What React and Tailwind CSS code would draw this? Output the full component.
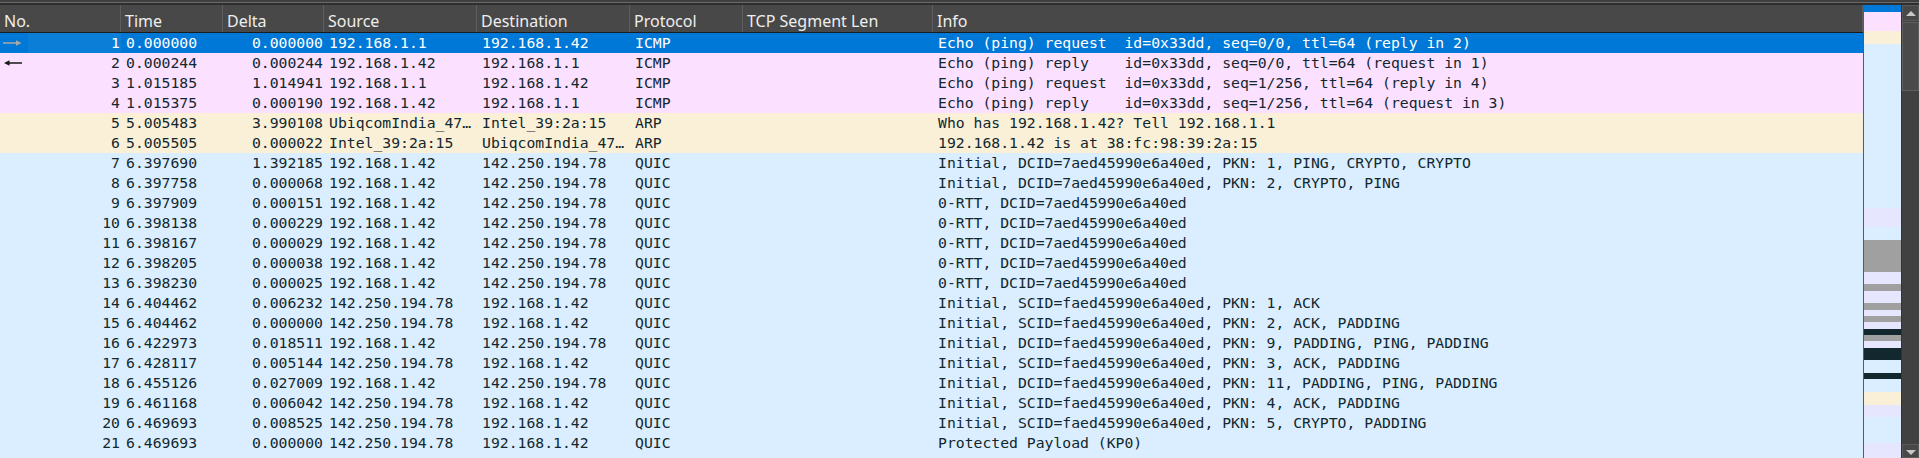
import React from "react";

const COLS = [
  { key: "no", title: "No.", w: "w-[121px]", right: true },
  { key: "time", title: "Time", w: "w-[102px]" },
  { key: "delta", title: "Delta", w: "w-[101px]", right: true },
  { key: "src", title: "Source", w: "w-[153px]" },
  { key: "dst", title: "Destination", w: "w-[153px]" },
  { key: "proto", title: "Protocol", w: "w-[113px]" },
  { key: "tcp", title: "TCP Segment Len", w: "w-[190px]" },
  { key: "info", title: "Info", w: "w-[930px]" },
];

const A = "192.168.1.42";
const G = "142.250.194.78";
const DC = "DCID=7aed45990e6a40ed";
const SC = "SCID=faed45990e6a40ed";
const DF = "DCID=faed45990e6a40ed";

const ROWS = [
  { c: "pink", no: 1, time: "0.000000", delta: "0.000000", src: "192.168.1.1", dst: A, proto: "ICMP", info: "Echo (ping) request  id=0x33dd, seq=0/0, ttl=64 (reply in 2)", sel: true, arrow: "right" },
  { c: "pink", no: 2, time: "0.000244", delta: "0.000244", src: A, dst: "192.168.1.1", proto: "ICMP", info: "Echo (ping) reply    id=0x33dd, seq=0/0, ttl=64 (request in 1)", arrow: "left" },
  { c: "pink", no: 3, time: "1.015185", delta: "1.014941", src: "192.168.1.1", dst: A, proto: "ICMP", info: "Echo (ping) request  id=0x33dd, seq=1/256, ttl=64 (reply in 4)" },
  { c: "pink", no: 4, time: "1.015375", delta: "0.000190", src: A, dst: "192.168.1.1", proto: "ICMP", info: "Echo (ping) reply    id=0x33dd, seq=1/256, ttl=64 (request in 3)" },
  { c: "beige", no: 5, time: "5.005483", delta: "3.990108", src: "UbiqcomIndia_47…", dst: "Intel_39:2a:15", proto: "ARP", info: "Who has 192.168.1.42? Tell 192.168.1.1" },
  { c: "beige", no: 6, time: "5.005505", delta: "0.000022", src: "Intel_39:2a:15", dst: "UbiqcomIndia_47…", proto: "ARP", info: "192.168.1.42 is at 38:fc:98:39:2a:15" },
  { c: "blue", no: 7, time: "6.397690", delta: "1.392185", src: A, dst: G, proto: "QUIC", info: `Initial, ${DC}, PKN: 1, PING, CRYPTO, CRYPTO` },
  { c: "blue", no: 8, time: "6.397758", delta: "0.000068", src: A, dst: G, proto: "QUIC", info: `Initial, ${DC}, PKN: 2, CRYPTO, PING` },
  { c: "blue", no: 9, time: "6.397909", delta: "0.000151", src: A, dst: G, proto: "QUIC", info: `0-RTT, ${DC}` },
  { c: "blue", no: 10, time: "6.398138", delta: "0.000229", src: A, dst: G, proto: "QUIC", info: `0-RTT, ${DC}` },
  { c: "blue", no: 11, time: "6.398167", delta: "0.000029", src: A, dst: G, proto: "QUIC", info: `0-RTT, ${DC}` },
  { c: "blue", no: 12, time: "6.398205", delta: "0.000038", src: A, dst: G, proto: "QUIC", info: `0-RTT, ${DC}` },
  { c: "blue", no: 13, time: "6.398230", delta: "0.000025", src: A, dst: G, proto: "QUIC", info: `0-RTT, ${DC}` },
  { c: "blue", no: 14, time: "6.404462", delta: "0.006232", src: G, dst: A, proto: "QUIC", info: `Initial, ${SC}, PKN: 1, ACK` },
  { c: "blue", no: 15, time: "6.404462", delta: "0.000000", src: G, dst: A, proto: "QUIC", info: `Initial, ${SC}, PKN: 2, ACK, PADDING` },
  { c: "blue", no: 16, time: "6.422973", delta: "0.018511", src: A, dst: G, proto: "QUIC", info: `Initial, ${DF}, PKN: 9, PADDING, PING, PADDING` },
  { c: "blue", no: 17, time: "6.428117", delta: "0.005144", src: G, dst: A, proto: "QUIC", info: `Initial, ${SC}, PKN: 3, ACK, PADDING` },
  { c: "blue", no: 18, time: "6.455126", delta: "0.027009", src: A, dst: G, proto: "QUIC", info: `Initial, ${DF}, PKN: 11, PADDING, PING, PADDING` },
  { c: "blue", no: 19, time: "6.461168", delta: "0.006042", src: G, dst: A, proto: "QUIC", info: `Initial, ${SC}, PKN: 4, ACK, PADDING` },
  { c: "blue", no: 20, time: "6.469693", delta: "0.008525", src: G, dst: A, proto: "QUIC", info: `Initial, ${SC}, PKN: 5, CRYPTO, PADDING` },
  { c: "blue", no: 21, time: "6.469693", delta: "0.000000", src: G, dst: A, proto: "QUIC", info: "Protected Payload (KP0)" },
];

const BG = {
  pink: "bg-[#fce0ff]",
  beige: "bg-[#faf0d7]",
  blue: "bg-[#daeeff]",
};

const MAP = [
  ["#0078d7", 7],
  ["#fce0ff", 19],
  ["#faf0d7", 13],
  ["#daeeff", 164],
  ["#e7e6ff", 19],
  ["#daeeff", 13],
  ["#a0a0a0", 32],
  ["#e7e6ff", 12],
  ["#a0a0a0", 7],
  ["#e7e6ff", 12],
  ["#a0a0a0", 7],
  ["#e7e6ff", 6],
  ["#a0a0a0", 6],
  ["#e7e6ff", 7],
  ["#12272e", 6],
  ["#a0a0a0", 6],
  ["#e7e6ff", 7],
  ["#12272e", 12],
  ["#daeeff", 13],
  ["#12272e", 6],
  ["#daeeff", 13],
  ["#faf0d7", 13],
  ["#e7e6ff", 12],
  ["#daeeff", 26],
  ["#e7e6ff", 15],
];

function Arrow({ dir, color }) {
  return (
    <svg width="20" height="8" viewBox="0 0 20 8" className="block">
      {dir === "right" ? (
        <>
          <line x1="0" y1="4" x2="17" y2="4" stroke={color} strokeWidth="1.5" />
          <path d="M13 1.2 L18.5 4 L13 6.8 Z" fill={color} />
        </>
      ) : (
        <>
          <line x1="3" y1="4" x2="19" y2="4" stroke={color} strokeWidth="1.5" />
          <path d="M6.5 1.2 L1 4 L6.5 6.8 Z" fill={color} />
        </>
      )}
    </svg>
  );
}

function Minimap() {
  let y = 0;
  return (
    <svg width="37" height="453" className="block">
      {MAP.map(([c, h], i) => {
        const r = <rect key={i} x="0" y={y} width="37" height={h} fill={c} />;
        y += h;
        return r;
      })}
    </svg>
  );
}

function Row({ r }) {
  const text = r.sel ? "text-white" : "text-[#12272e]";
  const bg = r.sel ? "bg-[#0078d7]" : BG[r.c];
  return (
    <div className={`flex h-[20px] shrink-0 ${bg} ${text}`}>
      {COLS.map((c) => {
        if (c.key === "no") {
          return (
            <div key={c.key} className={`${c.w} flex shrink-0 h-full`}>
              <div className="w-[28px] shrink-0 flex items-center pl-[3px]">
                {r.arrow === "right" && <Arrow dir="right" color="#a9a9a9" />}
                {r.arrow === "left" && <Arrow dir="left" color="#1a1a1a" />}
              </div>
              <div className={`flex-1 text-right pr-[1px] ${r.sel ? "bg-[#0b7fd8]" : ""}`}>{r.no}</div>
            </div>
          );
        }
        return (
          <div
            key={c.key}
            className={`${c.w} shrink-0 overflow-hidden whitespace-pre ${c.right ? "text-right pr-[1px]" : "pl-[5px]"}`}
          >
            {r[c.key] || ""}
          </div>
        );
      })}
    </div>
  );
}

export default function App() {
  return (
    <div className="w-[1919px] h-[458px] overflow-hidden flex flex-col bg-[#2f2f2f]">
      <div className="h-[2px] shrink-0 bg-[#3f3f3f]" />
      <div className="h-[1px] shrink-0 bg-[#6a6a6a]" />
      <div className="h-[2px] shrink-0 bg-[#2e2e2e]" />
      <div className="flex flex-1 min-h-0">
        <div className="w-[1863px] shrink-0 flex flex-col overflow-hidden">
          <div
            className="flex h-[28px] shrink-0 bg-[#484848] text-[#eeeeee] text-[16px] leading-[20px] border-b border-[#1c1c1c]"
            style={{ fontFamily: '"Noto Sans", "Open Sans", sans-serif' }}
          >
            {COLS.map((c) => (
              <div key={c.key} className={`${c.w} shrink-0 pl-[4px] pt-[6px] border-r border-[#5e5e5e] whitespace-nowrap`}>
                {c.title}
              </div>
            ))}
          </div>
          <div
            className="flex flex-col flex-1 bg-[#daeeff] text-[14.75px] leading-[20px]"
            style={{ fontFamily: '"DejaVu Sans Mono", "Liberation Mono", monospace' }}
          >
            {ROWS.map((r) => (
              <Row key={r.no} r={r} />
            ))}
          </div>
        </div>
        <div className="w-[1px] shrink-0 bg-[#5a5a5a]" />
        <div className="w-[37px] shrink-0 bg-[#daeeff]">
          <Minimap />
        </div>
        <div className="w-[18px] shrink-0 flex flex-col bg-[#414141] border-l border-[#333333]">
          <div className="h-[16px] shrink-0 bg-[#484848] border border-[#5a5a5a] flex items-center justify-center">
            <div className="w-0 h-0 border-l-[5px] border-r-[5px] border-b-[5px] border-l-transparent border-r-transparent border-b-[#c8c8c8]" />
          </div>
          <div className="h-[69px] shrink-0 mt-[1px] bg-[#4a4a4a] border border-[#606060]" />
          <div className="flex-1" />
          <div className="h-[14px] shrink-0 bg-[#484848] border border-[#5a5a5a] flex items-start justify-center pt-[5px]">
            <div className="w-0 h-0 border-l-[5px] border-r-[5px] border-t-[5px] border-l-transparent border-r-transparent border-t-[#c8c8c8]" />
          </div>
        </div>
      </div>
    </div>
  );
}
